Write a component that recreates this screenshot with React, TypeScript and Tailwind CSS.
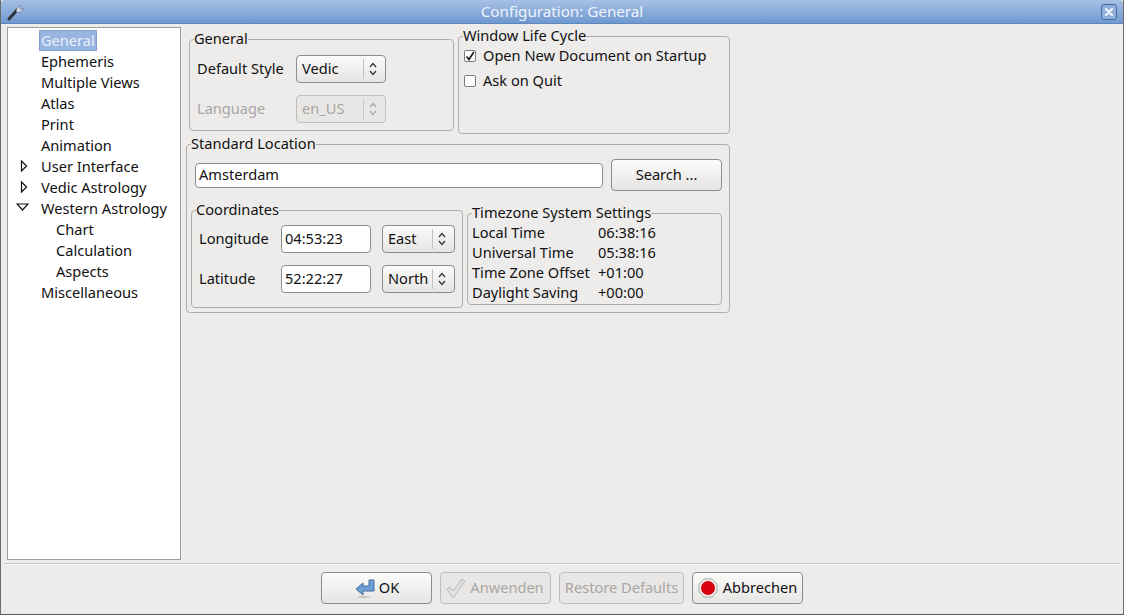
import type { ReactNode } from 'react';

const Updown = ({ disabled }: { disabled?: boolean }) => (
  <svg width="8" height="14" viewBox="0 0 8 14" fill="none" stroke={disabled ? '#aaa8a6' : '#333'} strokeWidth="1.2">
    <path d="M1 5 4 1.5 7 5M1 9l3 3.500L7 9" />
  </svg>
);

const ComboBox = ({ label, width, arrowWidth, disabled }: { label: string; width: string; arrowWidth: string; disabled?: boolean }) => (
  <div
    className={`flex h-[28px] items-center rounded-[4px] border pl-[5px] ${width} ${
      disabled
        ? 'border-[#c0bebc] bg-[#e8e7e5] text-[#a8a6a4]'
        : 'border-[#8f8d8b] bg-gradient-to-b from-[#fbfbfa] to-[#e6e5e3]'
    }`}
  >
    <span className="flex-1">{label}</span>
    <span className={`flex h-[20px] items-center justify-center border-l pr-[3px] ${arrowWidth} ${disabled ? 'border-[#c8c6c4]' : 'border-[#c4c2c0]'}`}>
      <Updown disabled={disabled} />
    </span>
  </div>
);

const GroupBox = ({ title, className, children }: { title: string; className: string; children: ReactNode }) => (
  <fieldset className={`rounded-[4px] border border-[#b0aeac] ${className}`}>
    <legend className="ml-[4px] h-[18px] leading-[16px]">{title}</legend>
    {children}
  </fieldset>
);

const TreeRow = ({ label, indent = 'pl-[33px]', arrow }: { label: string; indent?: string; arrow?: 'right' | 'down' }) => (
  <div className={`relative h-[21px] leading-[21px] ${indent}`}>
    {arrow === 'right' && (
      <svg className="absolute left-[12px] top-[4px]" width="8" height="12" viewBox="0 0 8 12" fill="none" stroke="#111" strokeWidth="1.2">
        <path d="M1.500 1v10L6.500 6z" />
      </svg>
    )}
    {arrow === 'down' && (
      <svg className="absolute left-[8px] top-[5px]" width="13" height="8" viewBox="0 0 13 8" fill="none" stroke="#111" strokeWidth="1.2">
        <path d="M1 1h11L6.500 7z" />
      </svg>
    )}
    {label}
  </div>
);

const CheckRow = ({ label, checked }: { label: string; checked?: boolean }) => (
  <div className="flex h-[22px] items-center gap-[7px] pl-[5px]">
    <span className="flex size-[12px] items-center justify-center rounded-[2px] border border-[#7c7a78] bg-white">
      {checked && (
        <svg width="10" height="10" viewBox="0 0 10 10" fill="none" stroke="#222" strokeWidth="1.700">
          <path d="M1.500 5.500 4 8.500 8.800 1" />
        </svg>
      )}
    </span>
    {label}
  </div>
);

const TimeRow = ({ label, value }: { label: string; value: string }) => (
  <div className="flex h-[20px] items-center">
    <span className="w-[126px]">{label}</span>
    {value}
  </div>
);

const DialogButton = ({ children, disabled, width }: { children: ReactNode; disabled?: boolean; width: string }) => (
  <div
    className={`flex h-[32px] items-center justify-center gap-[3px] rounded-[4px] border pb-px ${width} ${
      disabled
        ? 'border-[#c0bebc] bg-[#e8e7e5] text-[#a8a6a4]'
        : 'border-[#8f8d8b] bg-gradient-to-b from-[#fbfbfa] to-[#e6e5e3]'
    }`}
  >
    {children}
  </div>
);

const App = () => {
  return (
    <div className="flex h-[615px] w-[1124px] flex-col overflow-hidden border-x border-[#6b6b6b] bg-[#edeceb] font-['Noto_Sans',sans-serif] text-[14.6px] text-[#111]">
      {/* title bar */}
      <div className="relative -mx-px flex h-[24px] shrink-0 items-center justify-center rounded-t-[5px] border-b border-[#5f85bd] bg-gradient-to-b from-[#a6c0e4] to-[#7099d1] text-[15.2px] text-[#eef3fa]">
        <svg className="absolute left-[7px] top-[3px]" width="17" height="18" viewBox="0 0 17 18" fill="none">
          <path d="M2 16 10 7" stroke="#2f3338" strokeWidth="3" strokeLinecap="round" />
          <path d="M9 8 10.500 4.500 13.500 2l-1 3 1.500 1.500 2.500-1-2 3-4 1z" fill="#d4d9df" stroke="#59626e" strokeWidth="0.500" />
        </svg>
        Configuration: General
        <div className="absolute right-[7px] top-[4px] flex size-[16px] items-center justify-center rounded-[3px] border border-[#46699f] bg-[#8fb0dc]">
          <svg width="10" height="10" viewBox="0 0 10 10" stroke="#eef4fc" strokeWidth="2.400" strokeLinecap="round">
            <path d="m2 2 6 6M8 2 2 8" />
          </svg>
        </div>
      </div>

      {/* main */}
      <div className="flex flex-1 gap-[5px] pl-[6px] pt-[3px]">
        <div className="h-[533px] w-[174px] border border-[#9f9d9b] bg-white pt-[2px]">
          <div className="relative">
            <div className="absolute left-[31px] top-0 h-[21px] w-[58px] border border-dotted border-[#6f8fc0] bg-[#97b5e0]" />
            <div className="relative text-[#e9f0fa]">
              <TreeRow label="General" />
            </div>
          </div>
          <TreeRow label="Ephemeris" />
          <TreeRow label="Multiple Views" />
          <TreeRow label="Atlas" />
          <TreeRow label="Print" />
          <TreeRow label="Animation" />
          <TreeRow label="User Interface" arrow="right" />
          <TreeRow label="Vedic Astrology" arrow="right" />
          <TreeRow label="Western Astrology" arrow="down" />
          <TreeRow label="Chart" indent="pl-[48px]" />
          <TreeRow label="Calculation" indent="pl-[48px]" />
          <TreeRow label="Aspects" indent="pl-[48px]" />
          <TreeRow label="Miscellaneous" />
        </div>

        <div className="flex w-[544px] flex-col">
          <div className="flex items-start gap-[4px] pl-[3px]">
            <GroupBox title="General" className="mt-[3px] h-[101px] w-[265px] pt-[7px]">
              <div className="flex h-[28px] items-center gap-[10px] pl-[7px]">
                <span className="w-[89px] whitespace-nowrap">Default Style</span>
                <ComboBox label="Vedic" width="w-[90px]" arrowWidth="w-[22px]" />
              </div>
              <div className="mt-[12px] flex h-[28px] items-center gap-[10px] pl-[7px] text-[#a8a6a4]">
                <span className="w-[89px]">Language</span>
                <ComboBox label="en_US" width="w-[90px]" arrowWidth="w-[22px]" disabled />
              </div>
            </GroupBox>
            <GroupBox title="Window Life Cycle" className="h-[107px] w-[272px]">
              <CheckRow label="Open New Document on Startup" checked />
              <div className="mt-[3px]">
                <CheckRow label="Ask on Quit" />
              </div>
            </GroupBox>
          </div>

          <GroupBox title="Standard Location" className="mt-[1px] h-[178px] w-[544px] pt-[6px]">
            <div className="flex items-center gap-[8px] pl-[8px]">
              <div className="flex h-[25px] w-[408px] items-center rounded-[4px] border border-[#8f8d8b] bg-white pl-[3px]">Amsterdam</div>
              <DialogButton width="w-[111px]">Search ...</DialogButton>
            </div>
            <div className="mt-[10px] flex items-start gap-[4px] pl-[4px]">
              <GroupBox title="Coordinates" className="h-[107px] w-[272px] pt-[6px]">
                <div className="flex h-[28px] items-center pl-[7px]">
                  <span className="w-[82px]">Longitude</span>
                  <div className="flex h-[28px] w-[90px] items-center rounded-[4px] border border-[#8f8d8b] bg-white pl-[3px]">04:53:23</div>
                  <div className="ml-[11px]">
                    <ComboBox label="East" width="w-[73px]" arrowWidth="w-[22px]" />
                  </div>
                </div>
                <div className="mt-[12px] flex h-[28px] items-center pl-[7px]">
                  <span className="w-[82px]">Latitude</span>
                  <div className="flex h-[28px] w-[90px] items-center rounded-[4px] border border-[#8f8d8b] bg-white pl-[3px]">52:22:27</div>
                  <div className="ml-[11px]">
                    <ComboBox label="North" width="w-[73px]" arrowWidth="w-[22px]" />
                  </div>
                </div>
              </GroupBox>
              <GroupBox title="Timezone System Settings" className="mt-[3px] h-[101px] w-[255px] pt-[1px]">
                <div className="pl-[4px]">
                  <TimeRow label="Local Time" value="06:38:16" />
                  <TimeRow label="Universal Time" value="05:38:16" />
                  <TimeRow label="Time Zone Offset" value="+01:00" />
                  <TimeRow label="Daylight Saving" value="+00:00" />
                </div>
              </GroupBox>
            </div>
          </GroupBox>
        </div>
      </div>

      {/* button row */}
      <div className="mx-[3px] h-[2px] shrink-0 border-t border-[#c4c2c0] bg-[#f6f5f4]" />
      <div className="flex h-[50px] shrink-0 justify-center gap-[8px] border-b border-[#55575a] pt-[7px]">
        <DialogButton width="w-[111px]">
          <svg width="22" height="22" viewBox="0 0 22 22">
            <path d="M2 12 9 6v3h6V3h5v11H9v4z" fill="#6f9ed6" stroke="#3f6a9f" strokeWidth="1" />
            <ellipse cx="10" cy="20" rx="7" ry="1.200" fill="#c9c8c6" />
          </svg>
          OK
        </DialogButton>
        <DialogButton width="w-[111px]" disabled>
          <svg className="-ml-[2px]" width="22" height="22" viewBox="0 0 22 22" fill="#e0dfdd" stroke="#bdbbb9">
            <path d="M2 12l3-2 3 4L17 2l3 2L9 20H7z" />
          </svg>
          Anwenden
        </DialogButton>
        <DialogButton width="w-[125px]" disabled>
          Restore Defaults
        </DialogButton>
        <DialogButton width="w-[111px]">
          <svg className="mr-[2px]" width="20" height="20" viewBox="0 0 20 20">
            <path d="M6 1h8l5 5v8l-5 5H6l-5-5V6z" fill="#f2f1ef" stroke="#a9a7a5" />
            <circle cx="10" cy="10" r="7" fill="#d8000c" />
          </svg>
          Abbrechen
        </DialogButton>
      </div>
    </div>
  );
};

export default App;
